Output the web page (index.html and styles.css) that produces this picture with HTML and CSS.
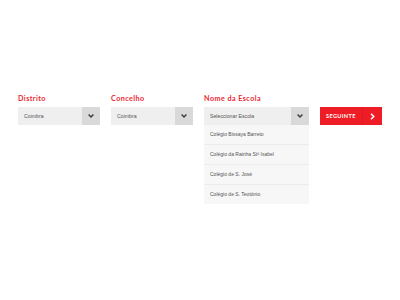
FILE: index.html
```html
<!DOCTYPE html>
<html lang="pt">
<head>
  <meta charset="UTF-8" />
  <meta name="viewport" content="width=device-width, initial-scale=1.0"/>
  <title>Escolha a Escola</title>
  <link rel="stylesheet" href="styles.css">
</head>
<body>

  <div class="form">
    <label class="label">Distrito</label>
    <label class="label">Concelho</label>
    <label class="label">Nome da Escola</label>
    <span></span>

    <div class="select">
      <span class="value">Coimbra</span>
      <span class="arrow">
        <svg width="6" height="4" viewBox="0 0 6 4"><polyline points="0.6,0.6 3,3 5.4,0.6" fill="none" stroke="#3a3a3a" stroke-width="1.4"/></svg>
      </span>
    </div>

    <div class="select">
      <span class="value">Coimbra</span>
      <span class="arrow">
        <svg width="6" height="4" viewBox="0 0 6 4"><polyline points="0.6,0.6 3,3 5.4,0.6" fill="none" stroke="#3a3a3a" stroke-width="1.4"/></svg>
      </span>
    </div>

    <div class="school">
      <div class="select">
        <span class="value">Seleccionar Escola</span>
        <span class="arrow">
          <svg width="6" height="4" viewBox="0 0 6 4"><polyline points="0.6,0.6 3,3 5.4,0.6" fill="none" stroke="#3a3a3a" stroke-width="1.4"/></svg>
        </span>
      </div>
      <ul class="options">
        <li>Colégio Bissaya Barreto</li>
        <li>Colégio da Rainha Stª Isabel</li>
        <li>Colégio de S. José</li>
        <li>Colégio de S. Teotónio</li>
      </ul>
    </div>

    <button class="next">
      <span class="next-text">SEGUINTE</span>
      <span class="next-icon">
        <svg width="5" height="7" viewBox="0 0 5 7"><polyline points="1,0.8 3.7,3.5 1,6.2" fill="none" stroke="#fff" stroke-width="1.5"/></svg>
      </span>
    </button>
  </div>

</body>
</html>
```

FILE: styles.css
```css
body {
  margin: 0;
  background: #fff;
  font-family: 'Liberation Sans', Arial, sans-serif;
}

.form {
  display: grid;
  grid-template-columns: 82px 82px 105px 62px;
  grid-template-rows: 13px auto;
  column-gap: 11px;
  align-items: start;
  padding: 94px 0 0 18px;
}

.label {
  font-family: Lato, 'Liberation Sans', sans-serif;
  font-weight: 700;
  font-size: 7.2px;
  line-height: 10px;
  color: #ee1f30;
  letter-spacing: 0.45px;
}

.select {
  display: flex;
  height: 18px;
  background: #efefef;
}

.select .value {
  flex: 1;
  padding-left: 6px;
  font-size: 5.2px;
  line-height: 18px;
  color: #555;
}

.select .arrow {
  width: 18px;
  display: flex;
  align-items: center;
  justify-content: center;
  background: #d9d9d9;
}

.options {
  list-style: none;
  margin: 0;
  padding: 0;
  background: #f7f7f7;
}

.options li {
  height: 19px;
  line-height: 19px;
  padding-left: 6px;
  font-size: 5px;
  color: #555;
  border-bottom: 1px solid #ececec;
}

.options li:last-child {
  border-bottom: none;
}

.next {
  display: flex;
  height: 18px;
  padding: 0;
  border: none;
  background: #ee1c25;
  color: #fff;
  cursor: pointer;
}

.next-text {
  flex: 1;
  font-family: Lato, 'Liberation Sans', sans-serif;
  font-weight: 700;
  font-size: 5.5px;
  line-height: 18px;
  letter-spacing: 0.4px;
  padding-left: 6px;
  text-align: left;
}

.next-icon {
  width: 19px;
  display: flex;
  align-items: center;
  justify-content: center;
  border-left: 1px solid #e41820;
}
```
